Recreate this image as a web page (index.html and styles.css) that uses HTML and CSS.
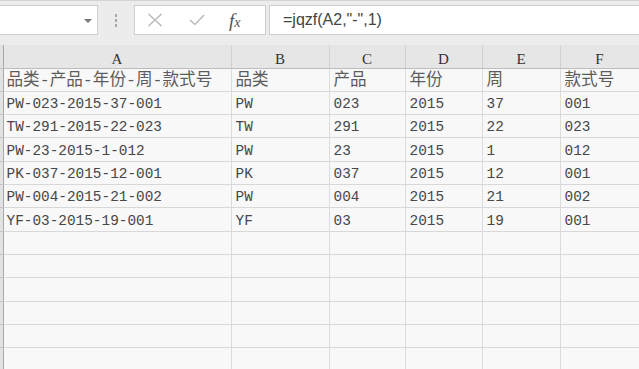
FILE: index.html
```html
<!DOCTYPE html>
<html lang="zh-CN">
<head>
  <meta charset="UTF-8" />
  <title>jqzf</title>
  <link rel="stylesheet" href="styles.css">
</head>
<body>
  <div class="window">
    <div class="toolbar">
      <div class="namebox"><span class="caret"></span></div>
      <div class="grip"><i></i><i></i><i></i></div>
      <div class="buttons">
        <svg class="icon" width="16" height="14" viewBox="0 0 16 14">
          <path d="M1.5 1 L14.5 13 M14.5 1 L1.5 13" />
        </svg>
        <svg class="icon" width="16" height="12" viewBox="0 0 16 12">
          <path d="M1 6 L6 10.5 L15 1" />
        </svg>
        <span class="fx">f<small>x</small></span>
      </div>
      <div class="formula">=jqzf(A2,"-",1)</div>
    </div>

    <table class="sheet">
      <colgroup>
        <col class="c-edge">
        <col class="c-a">
        <col class="c-b">
        <col class="c-c">
        <col class="c-d">
        <col class="c-e">
        <col class="c-f">
      </colgroup>
      <thead>
        <tr>
          <th class="edge"></th>
          <th>A</th><th>B</th><th>C</th><th>D</th><th>E</th><th>F</th>
        </tr>
      </thead>
      <tbody>
        <tr class="titles">
          <td class="edge"></td>
          <td>品类-产品-年份-周-款式号</td><td>品类</td><td>产品</td><td>年份</td><td>周</td><td>款式号</td>
        </tr>
        <tr>
          <td class="edge"></td>
          <td>PW-023-2015-37-001</td><td>PW</td><td>023</td><td>2015</td><td>37</td><td>001</td>
        </tr>
        <tr>
          <td class="edge"></td>
          <td>TW-291-2015-22-023</td><td>TW</td><td>291</td><td>2015</td><td>22</td><td>023</td>
        </tr>
        <tr>
          <td class="edge"></td>
          <td>PW-23-2015-1-012</td><td>PW</td><td>23</td><td>2015</td><td>1</td><td>012</td>
        </tr>
        <tr>
          <td class="edge"></td>
          <td>PK-037-2015-12-001</td><td>PK</td><td>037</td><td>2015</td><td>12</td><td>001</td>
        </tr>
        <tr>
          <td class="edge"></td>
          <td>PW-004-2015-21-002</td><td>PW</td><td>004</td><td>2015</td><td>21</td><td>002</td>
        </tr>
        <tr>
          <td class="edge"></td>
          <td>YF-03-2015-19-001</td><td>YF</td><td>03</td><td>2015</td><td>19</td><td>001</td>
        </tr>
        <tr><td class="edge"></td><td></td><td></td><td></td><td></td><td></td><td></td></tr>
        <tr><td class="edge"></td><td></td><td></td><td></td><td></td><td></td><td></td></tr>
        <tr><td class="edge"></td><td></td><td></td><td></td><td></td><td></td><td></td></tr>
        <tr><td class="edge"></td><td></td><td></td><td></td><td></td><td></td><td></td></tr>
        <tr><td class="edge"></td><td></td><td></td><td></td><td></td><td></td><td></td></tr>
        <tr><td class="edge"></td><td></td><td></td><td></td><td></td><td></td><td></td></tr>
        <tr><td class="edge"></td><td></td><td></td><td></td><td></td><td></td><td></td></tr>
      </tbody>
    </table>
  </div>
</body>
</html>
```

FILE: styles.css
```css
* {
  margin: 0;
  padding: 0;
  box-sizing: border-box;
}

body {
  background: #f8f8f8;
  font-family: "Liberation Mono", "Noto Sans CJK SC", monospace;
  color: #474747;
}

.window {
  width: 639px;
  height: 369px;
  overflow: hidden;
}

/* formula bar */
.toolbar {
  height: 46px;
  display: flex;
  align-items: flex-start;
  padding-top: 4px;
  background: #ececec;
  border-top: 1px solid #d4d4d4;
}

.namebox {
  width: 98px;
  height: 30px;
  background: #fff;
  border: 1px solid #cfcfcf;
  border-left: none;
  position: relative;
}

.caret {
  position: absolute;
  left: 84px;
  top: 13px;
  border-left: 4px solid transparent;
  border-right: 4px solid transparent;
  border-top: 4px solid #777;
}

.grip {
  width: 36px;
  height: 30px;
  display: flex;
  flex-direction: column;
  align-items: center;
  justify-content: center;
  gap: 2px;
}

.grip i {
  width: 2px;
  height: 3px;
  background: #a8a8a8;
}

.buttons {
  width: 132px;
  height: 30px;
  background: #fff;
  border: 1px solid #cfcfcf;
  display: flex;
  align-items: center;
  padding-left: 12px;
  gap: 26px;
}

.icon {
  fill: none;
  stroke: #bcbcbc;
  stroke-width: 1.6;
}

.fx {
  font-family: "Liberation Serif", serif;
  font-style: italic;
  font-size: 19px;
  color: #555;
  margin-left: -2px;
  line-height: 1;
}

.fx small {
  font-size: 14px;
}

.formula {
  flex: 1;
  height: 30px;
  margin-left: 3px;
  background: #fff;
  border: 1px solid #cfcfcf;
  border-right: none;
  padding-left: 13px;
  font-family: "Liberation Sans", Arial, sans-serif;
  font-size: 16px;
  line-height: 28px;
  color: #444;
}

/* grid */
.sheet {
  border-collapse: collapse;
  table-layout: fixed;
  width: 639px;
  margin-top: -1px;
}

.c-edge { width: 3px; }
.c-a { width: 228px; }
.c-b { width: 98px; }
.c-c { width: 76px; }
.c-d { width: 77px; }
.c-e { width: 78px; }
.c-f { width: 79px; }

.sheet th {
  height: 23px;
  background: #e6e6e6;
  border-right: 1px solid #d2d2d2;
  border-bottom: 1px solid #bdbdbd;
  font-family: "Liberation Serif", serif;
  font-weight: normal;
  font-size: 15px;
  color: #333;
  vertical-align: bottom;
  padding-bottom: 0;
  line-height: 18px;
}

.sheet td {
  height: 23.33px;
  background: #f8f8f8;
  border-right: 1px solid #dcdcdc;
  border-bottom: 1px solid #d8d8d8;
  font-size: 14.4px;
  line-height: 16px;
  padding: 0 0 2px 3px;
  vertical-align: bottom;
  white-space: nowrap;
  overflow: hidden;
}

.sheet td + td + td {
  padding-left: 4px;
}

.sheet .edge {
  padding: 0;
  background: #e2e2e2;
  border-right: 1px solid #a9a9a9;
  border-bottom: 1px solid #c4c4c4;
}

.titles td {
  font-size: 16.6px;
  color: #5c5c5c;
}
```
